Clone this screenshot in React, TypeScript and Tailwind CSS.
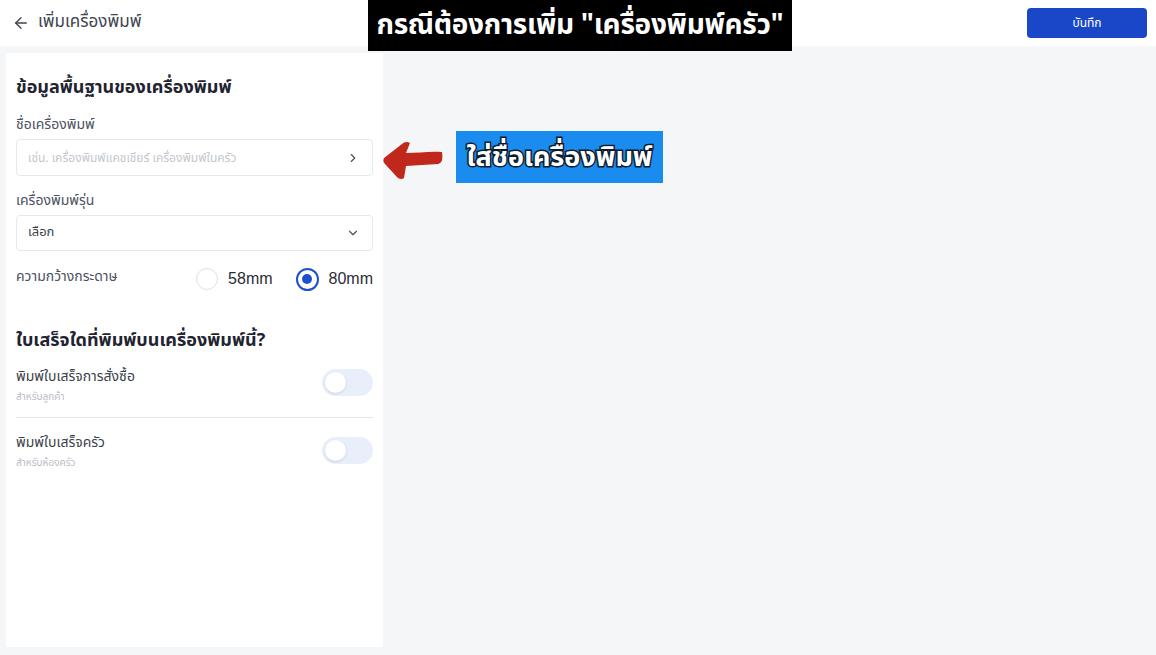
import React, { useState } from 'react';
import { ArrowLeft, ChevronRight, ChevronDown } from 'lucide-react';

const Toggle: React.FC<{ on: boolean; onChange: () => void }> = ({ on, onChange }) => (
  <button
    onClick={onChange}
    className={`w-[51px] h-[27px] rounded-full p-[3px] flex items-center ${on ? 'bg-[#1e4fcf] justify-end' : 'bg-[#e8eefa] justify-start'}`}
  >
    <span className="w-[21px] h-[21px] rounded-full bg-white shadow-sm"></span>
  </button>
);

const App: React.FC = () => {
  const [width, setWidth] = useState<'58' | '80'>('80');
  const [orderOn, setOrderOn] = useState(false);
  const [kitchenOn, setKitchenOn] = useState(false);

  return (
    <div className="relative w-[1156px] h-[655px] bg-[#f5f6f8] flex flex-col overflow-hidden font-['Noto_Sans_Thai','Noto_Sans','Liberation_Sans',sans-serif]">
      {/* Header */}
      <div className="h-[46px] bg-white flex items-center justify-between pl-[12px] pr-[9px]">
        <div className="flex items-center gap-[8px] text-[#3f4550]">
          <ArrowLeft size={18} strokeWidth={1.8} />
          <span className="text-[17px]">เพิ่มเครื่องพิมพ์</span>
        </div>
        <button className="w-[120px] h-[30px] rounded-[4px] bg-[#1a47c7] text-white text-[12px] flex items-center justify-center">
          บันทึก
        </button>
      </div>

      {/* Body */}
      <div className="flex-1 flex pt-[7px] pb-[8px] pl-[6px]">
        <div className="w-[377px] bg-white px-[10px] pt-[22px]">
          <h2 className="text-[18px] font-bold text-[#1f2430] leading-[26px]">ข้อมูลพื้นฐานของเครื่องพิมพ์</h2>

          <div className="mt-[14px] text-[14px] text-[#4b5160] leading-[20px]">ชื่อเครื่องพิมพ์</div>
          <div className="mt-[4px] h-[37px] border border-[#e6e8ec] rounded-[4px] flex items-center justify-between pl-[11px] pr-[12px]">
            <span className="text-[12px] text-[#c3c7ce]">เช่น. เครื่องพิมพ์แคชเชียร์ เครื่องพิมพ์ในครัว</span>
            <ChevronRight size={14} className="text-[#4b5160]" />
          </div>

          <div className="mt-[15px] text-[14px] text-[#4b5160] leading-[20px]">เครื่องพิมพ์รุ่น</div>
          <div className="mt-[4px] h-[36px] border border-[#e6e8ec] rounded-[4px] flex items-center justify-between pl-[11px] pr-[12px]">
            <span className="text-[13px] text-[#3a3f4a]">เลือก</span>
            <ChevronDown size={14} className="text-[#4b5160]" />
          </div>

          <div className="mt-[16px] flex items-center justify-between">
            <span className="text-[14px] text-[#4b5160] -mt-[5px]">ความกว้างกระดาษ</span>
            <div className="flex items-center">
              <button onClick={() => setWidth('58')} className="flex items-center gap-[10px]">
                <span className={`w-[22px] h-[22px] rounded-full flex items-center justify-center ${width === '58' ? 'border-2 border-[#1e4fcf]' : 'border-[1.5px] border-[#dfe1e5]'}`}>
                  {width === '58' && <span className="w-[10px] h-[10px] rounded-full bg-[#1e4fcf]"></span>}
                </span>
                <span className="text-[16px] text-[#2a2e36] font-['Liberation_Sans',sans-serif]">58mm</span>
              </button>
              <button onClick={() => setWidth('80')} className="flex items-center gap-[10px] ml-[23px]">
                <span className={`w-[23px] h-[23px] rounded-full flex items-center justify-center ${width === '80' ? 'border-2 border-[#1e4fcf]' : 'border-[1.5px] border-[#dfe1e5]'}`}>
                  {width === '80' && <span className="w-[10px] h-[10px] rounded-full bg-[#1e4fcf]"></span>}
                </span>
                <span className="text-[16px] text-[#2a2e36] font-['Liberation_Sans',sans-serif]">80mm</span>
              </button>
            </div>
          </div>

          <h2 className="mt-[37px] text-[18px] font-bold text-[#1f2430] leading-[26px]">ใบเสร็จใดที่พิมพ์บนเครื่องพิมพ์นี้?</h2>

          <div className="mt-[13px] flex items-start justify-between pb-[12px] border-b border-[#e6e8ec]">
            <div>
              <div className="text-[14px] text-[#3a3f4a] leading-[20px]">พิมพ์ใบเสร็จการสั่งซื้อ</div>
              <div className="text-[10px] text-[#b9bdc5] leading-[16px] mt-[2px]">สำหรับลูกค้า</div>
            </div>
            <div className="mt-[2px]">
              <Toggle on={orderOn} onChange={() => setOrderOn(!orderOn)} />
            </div>
          </div>

          <div className="mt-[15px] flex items-start justify-between">
            <div>
              <div className="text-[14px] text-[#3a3f4a] leading-[20px]">พิมพ์ใบเสร็จครัว</div>
              <div className="text-[10px] text-[#b9bdc5] leading-[16px] mt-[2px]">สำหรับห้องครัว</div>
            </div>
            <div className="mt-[4px]">
              <Toggle on={kitchenOn} onChange={() => setKitchenOn(!kitchenOn)} />
            </div>
          </div>
        </div>
      </div>

      {/* Video caption overlay */}
      <div className="absolute left-[368px] top-0 w-[424px] h-[51px] bg-black flex items-center justify-center">
        <span className="text-white text-[28px] font-bold leading-none whitespace-nowrap tracking-[-0.3px]">กรณีต้องการเพิ่ม "เครื่องพิมพ์ครัว"</span>
      </div>

      {/* Annotation arrow */}
      <svg className="absolute left-[380px] top-[138px]" width="64" height="44" viewBox="0 0 64 44">
        <path
          d="M62 14 C50 13 38 15 26 15 L30 5 C27 3 24 4 22 6 L4 20 C3 22 3 24 5 26 L16 38 C18 41 22 42 24 40 L26 28 C36 27 48 27 58 26 C62 25 63 22 62 14 Z"
          fill="#c0281b"
        />
      </svg>

      {/* Annotation label */}
      <div className="absolute left-[456px] top-[131px] w-[207px] h-[52px] bg-[#1a8cf0] flex items-center justify-center">
        <span className="text-white text-[27px] font-bold leading-none whitespace-nowrap [-webkit-text-stroke:3px_#0d1a2a] [paint-order:stroke_fill]">ใส่ชื่อเครื่องพิมพ์</span>
      </div>
    </div>
  );
};

export default App;
